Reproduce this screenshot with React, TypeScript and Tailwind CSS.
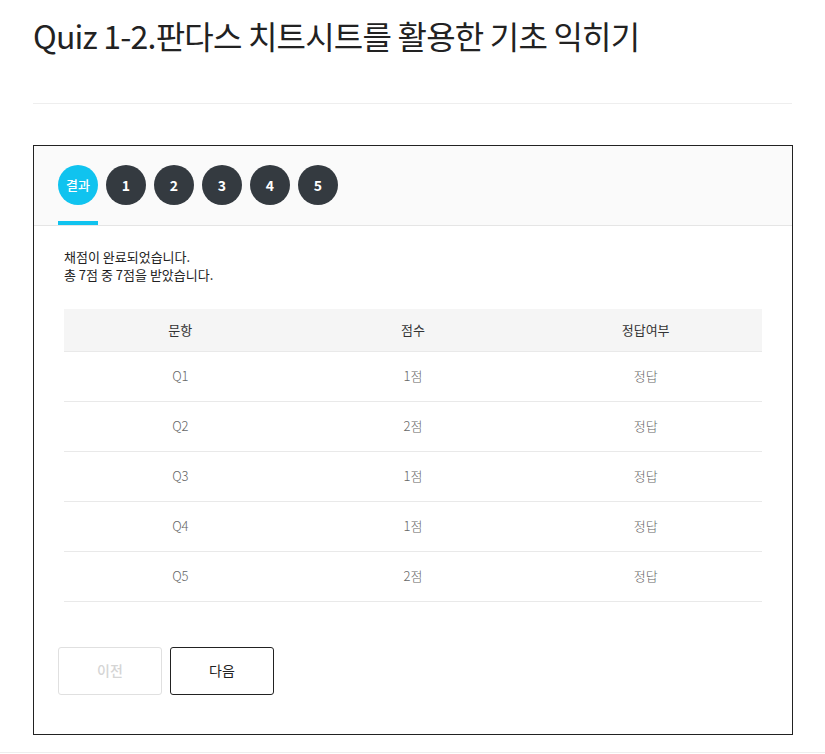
const rows = [
  { q: 'Q1', score: '1점', result: '정답' },
  { q: 'Q2', score: '2점', result: '정답' },
  { q: 'Q3', score: '1점', result: '정답' },
  { q: 'Q4', score: '1점', result: '정답' },
  { q: 'Q5', score: '2점', result: '정답' },
];

const tabs = ['1', '2', '3', '4', '5'];

export default function App() {
  return (
    <div className="min-h-[754px] bg-white font-['Noto_Sans_CJK_KR','Noto_Sans',sans-serif] text-[#222]">
      <div className="pl-[33px] pr-[32px]">
        <h1 className="pt-[13px] text-[32px] leading-[44px] font-normal tracking-[-0.8px] text-[#222]">
          Quiz 1-2.판다스 치트시트를 활용한 기초 익히기
        </h1>
        <div className="mt-[46px] mr-px h-px bg-[#eeeeee]" />

        <div className="mt-[41px] h-[590px] border border-[#222]">
          {/* 탭 */}
          <div className="flex h-[80px] items-start gap-2 border-b border-[#e5e5e5] bg-[#fafafa] px-6 pt-[19px]">
            <div className="flex flex-col items-center">
              <div className="flex h-10 w-10 items-center justify-center rounded-full bg-[#10c3ef] text-[13px] font-medium text-white">
                결과
              </div>
              <div className="mt-[16px] h-[4px] w-10 bg-[#10c3ef]" />
            </div>
            {tabs.map((t) => (
              <div
                key={t}
                className="flex h-10 w-10 items-center justify-center rounded-full bg-[#343a40] text-[14px] font-bold text-white"
              >
                {t}
              </div>
            ))}
          </div>

          <div className="px-[30px]">
            <p className="mt-[22px] text-[13px] leading-[18px] text-[#222]">
              채점이 완료되었습니다.
              <br />
              총 7점 중 7점을 받았습니다.
            </p>

            <table className="mt-[25px] w-full table-fixed border-collapse text-center text-[13px] text-[#666]">
              <thead>
                <tr className="h-[42px] border-b border-[#e9e9e9] bg-[#f5f5f5]">
                  <th className="font-normal text-[#333]">문항</th>
                  <th className="font-normal text-[#333]">점수</th>
                  <th className="font-normal text-[#333]">정답여부</th>
                </tr>
              </thead>
              <tbody>
                {rows.map((r) => (
                  <tr key={r.q} className="h-[50px] border-b border-[#e9e9e9]">
                    <td className="font-light">{r.q}</td>
                    <td className="font-light">{r.score}</td>
                    <td className="font-light">{r.result}</td>
                  </tr>
                ))}
              </tbody>
            </table>
          </div>

          <div className="mt-[45px] flex gap-2 px-6">
            <button className="h-[48px] w-[104px] rounded-[3px] border border-[#e0e0e0] text-[14px] font-medium text-[#d5d5d5]">
              이전
            </button>
            <button className="h-[48px] w-[104px] rounded-[3px] border border-[#222] text-[14px] text-[#222]">
              다음
            </button>
          </div>
        </div>
      </div>
      <div className="mt-[17px] h-px bg-[#eeeeee]" />
    </div>
  );
}
